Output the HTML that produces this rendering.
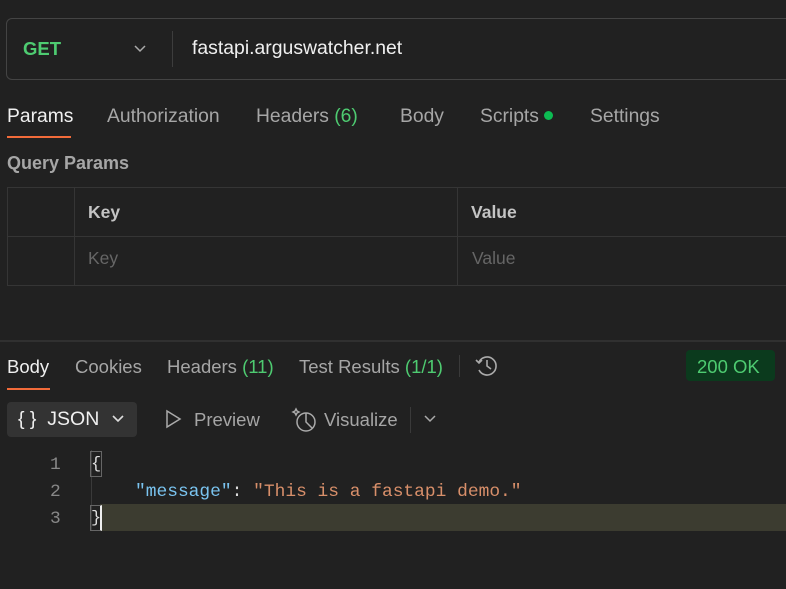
<!DOCTYPE html>
<html><head><meta charset="utf-8"><style>
*{margin:0;padding:0;box-sizing:border-box}
body{width:786px;height:589px;background:#212121;font-family:"Liberation Sans",sans-serif;color:#a6a6a6;position:relative;overflow:hidden;font-size:18px}
.a{position:absolute;white-space:nowrap}
.g{color:#4ecb71}
.w{color:#f0f0f0}
.t{font-size:19.3px}
.r{font-size:18.5px}
.mono{font-family:"Liberation Mono",monospace;font-size:17.9px}
</style></head><body>
<div class="a" style="left:6px;top:18px;width:800px;height:62px;border:1px solid #444;border-radius:6px"></div>
<div class="a g" style="left:23px;top:38px;font-weight:bold;font-size:18.5px">GET</div>
<svg class="a" style="left:133px;top:44px" width="14" height="10"><path d="M2 2l5 5 5-5" stroke="#aaa" stroke-width="1.5" fill="none"/></svg>
<div class="a" style="left:172px;top:31px;width:1px;height:36px;background:#3d3d3d"></div>
<div class="a w" style="left:192px;top:37px;font-size:19.4px">fastapi.arguswatcher.net</div>

<div class="a w t" style="left:7px;top:106px">Params</div>
<div class="a" style="left:7px;top:136px;width:64px;height:2px;background:#f26b3a"></div>
<div class="a t" style="left:107px;top:106px">Authorization</div>
<div class="a t" style="left:256px;top:106px">Headers <span class="g">(6)</span></div>
<div class="a t" style="left:400px;top:106px">Body</div>
<div class="a t" style="left:480px;top:106px">Scripts <span style="display:inline-block;width:9px;height:9px;border-radius:50%;background:#0cbb52;vertical-align:2px"></span></div>
<div class="a t" style="left:590px;top:106px">Settings</div>
<div class="a" style="left:7px;top:153px;font-weight:bold;font-size:18px">Query Params</div>

<div class="a" style="left:7px;top:187px;width:790px;height:99px;border:1px solid #353535;border-right:none"></div>
<div class="a" style="left:7px;top:236px;width:790px;height:1px;background:#353535"></div>
<div class="a" style="left:74px;top:187px;width:1px;height:99px;background:#353535"></div>
<div class="a" style="left:457px;top:187px;width:1px;height:99px;background:#353535"></div>
<div class="a" style="left:88px;top:202px;font-weight:bold;font-size:17.5px;color:#c4c4c4">Key</div>
<div class="a" style="left:471px;top:202px;font-weight:bold;font-size:17.5px;color:#c4c4c4">Value</div>
<div class="a" style="left:88px;top:248px;font-size:17.5px;color:#666">Key</div>
<div class="a" style="left:472px;top:248px;font-size:17.5px;color:#666">Value</div>

<div class="a" style="left:0;top:340px;width:786px;height:2px;background:#303030"></div>
<div class="a w r" style="left:7px;top:356px">Body</div>
<div class="a" style="left:7px;top:388px;width:43px;height:2px;background:#f26b3a"></div>
<div class="a r" style="left:75px;top:356px">Cookies</div>
<div class="a r" style="left:167px;top:356px">Headers <span class="g">(11)</span></div>
<div class="a r" style="left:299px;top:356px">Test Results <span class="g">(1/1)</span></div>
<div class="a" style="left:459px;top:355px;width:1px;height:22px;background:#3a3a3a"></div>
<svg class="a" style="left:474px;top:353px" width="26" height="26" viewBox="0 0 26 26" fill="none" stroke="#aaa" stroke-width="1.6"><path d="M5 9a9 9 0 1 1 0 8"/><path d="M2 7l3 3 3-3"/><path d="M13 7v6l4 3"/></svg>
<div class="a" style="left:686px;top:350px;width:89px;height:31px;background:#0b3a1d;border-radius:4px"></div>
<div class="a g r" style="left:697px;top:356px">200 OK</div>

<div class="a" style="left:7px;top:402px;width:130px;height:35px;background:#333;border-radius:4px"></div>
<div class="a w" style="left:18px;top:408px;font-size:19.5px">{ } &nbsp;JSON</div>
<svg class="a" style="left:111px;top:414px" width="14" height="10"><path d="M2 2l5 5 5-5" stroke="#ddd" stroke-width="1.6" fill="none"/></svg>
<svg class="a" style="left:164px;top:409px" width="18" height="20"><path d="M3 2l13 8-13 8z" stroke="#aaa" stroke-width="1.5" fill="none"/></svg>
<div class="a r" style="left:194px;top:409px">Preview</div>
<svg class="a" style="left:291px;top:406px" width="28" height="28" viewBox="0 0 28 28" fill="none" stroke="#aaa" stroke-width="1.5"><circle cx="15" cy="16" r="9"/><path d="M15 7v9l6 6"/><path d="M5 3l1 2 2 1-2 1-1 2-1-2-2-1 2-1z"/></svg>
<div class="a r" style="left:324px;top:409px">Visualize</div>
<div class="a" style="left:410px;top:407px;width:1px;height:26px;background:#3a3a3a"></div>
<svg class="a" style="left:423px;top:414px" width="14" height="10"><path d="M2 2l5 5 5-5" stroke="#aaa" stroke-width="1.5" fill="none"/></svg>

<div class="a" style="left:100px;top:504px;width:700px;height:27px;background:#3c3c30"></div>
<div class="a" style="left:91px;top:450px;width:1px;height:81px;background:#3a3a3a"></div>
<div class="a mono" style="left:50px;top:455px;color:#888">1</div>
<div class="a mono" style="left:50px;top:482px;color:#888">2</div>
<div class="a mono" style="left:50px;top:509px;color:#888">3</div>
<div class="a mono" style="left:90px;top:451px;width:12px;height:26px;border:1px solid #666;color:#ddd;font-size:17px;line-height:26px">{</div>
<div class="a mono" style="left:135px;top:482px"><span style="color:#7ac4f0">"message"</span><span style="color:#ddd">: </span><span style="color:#d88f6a">"This is a fastapi demo."</span></div>
<div class="a mono" style="left:90px;top:505px;width:12px;height:26px;border:1px solid #666;border-right:2px solid #eee;color:#ddd;font-size:17px;line-height:26px">}</div>
</body></html>
